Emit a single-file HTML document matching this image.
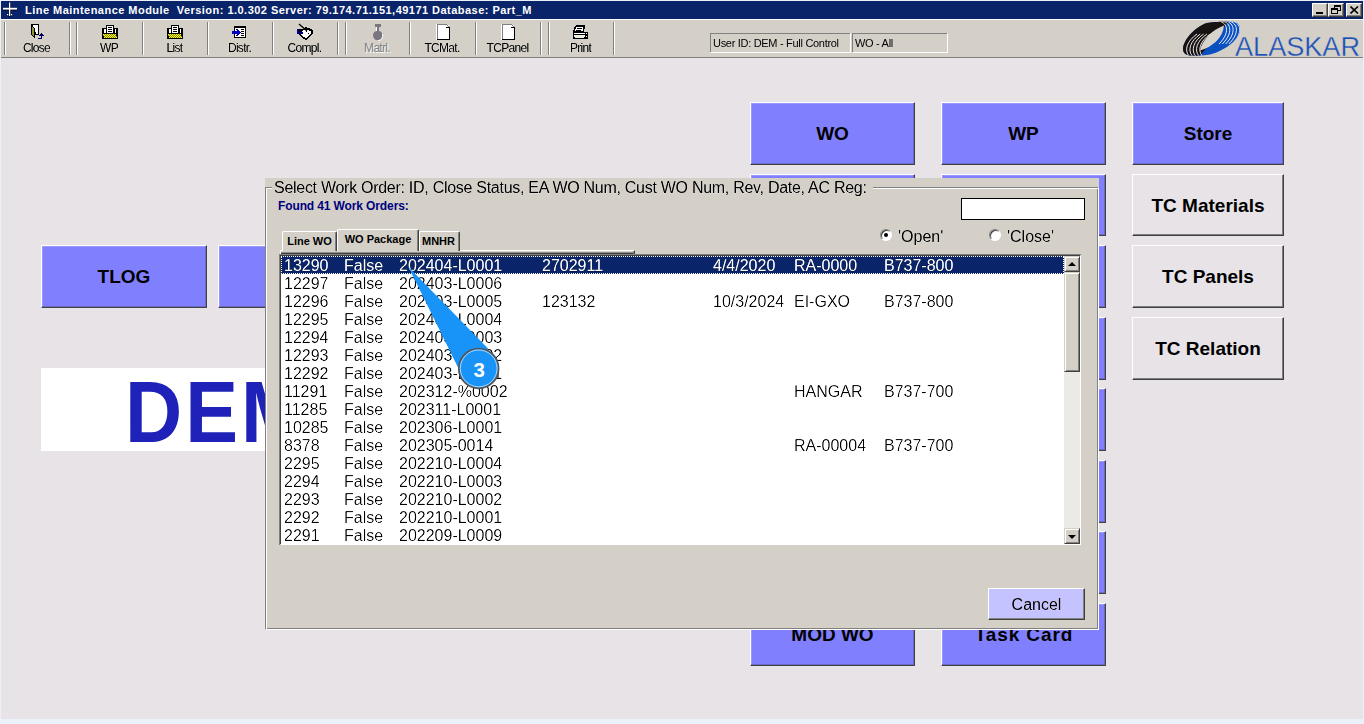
<!DOCTYPE html>
<html><head><meta charset="utf-8">
<style>
*{box-sizing:border-box;margin:0;padding:0}
html,body{width:1364px;height:724px;overflow:hidden;background:#ECF0F9;font-family:"Liberation Sans",sans-serif}
.a{position:absolute}
#bg{left:1px;top:1px;width:1362px;height:718px;background:#E7E3E7}
#title{left:1px;top:1px;width:1362px;height:18px;background:#0A246A}
#ttxt{left:25px;top:3px;color:#fff;font-weight:bold;font-size:11px;letter-spacing:0.47px;white-space:pre;line-height:14px}
.tb{width:16px;height:14px;top:3px;background:#D4D0C8;border-top:1px solid #fff;border-left:1px solid #fff;border-right:1px solid #404040;border-bottom:1px solid #404040;box-shadow:inset -1px -1px 0 #808080}
#toolbar{left:1px;top:20px;width:1362px;height:37px;background:#D4D0C8}
#tbline{left:1px;top:57px;width:1362px;height:1px;background:#808080}
#tbline2{left:1px;top:19px;width:1362px;height:1px;background:#fff}
.sep{top:22px;width:2px;height:33px;border-left:1px solid #808080;border-right:1px solid #fff}
.lbl{top:42px;font-size:12px;letter-spacing:-0.7px;-webkit-text-stroke:0.2px #D4D0C8;filter:grayscale(1) contrast(2.2);line-height:13px;color:#000;text-align:center;white-space:pre}
.field{top:33px;height:20px;border-top:1px solid #808080;border-left:1px solid #808080;border-right:1px solid #fff;border-bottom:1px solid #fff;font-size:11px;line-height:19px;letter-spacing:-0.3px;padding-left:2px;filter:grayscale(1) contrast(1.8);white-space:pre;color:#000}
.bb{background:#8080FF;border-top:1px solid #fff;border-left:1px solid #fff;border-right:1px solid #404040;border-bottom:1px solid #404040;box-shadow:inset -1px -1px 0 #6A6AC8,inset 1px 1px 0 #9898FF;font-weight:bold;font-size:19px;text-align:center;color:#000;line-height:61px;white-space:pre}
.lb{background:#E7E3E7;border-top:1px solid #fff;border-left:1px solid #fff;border-right:1px solid #404040;border-bottom:1px solid #404040;box-shadow:inset -1px -1px 0 #808080;font-weight:bold;font-size:19px;text-align:center;color:#000;line-height:61px;white-space:pre}
#dlg{left:265px;top:178px;width:834px;height:452px;background:#D4D0C8}
.row{position:absolute;left:0;width:783px;height:18px;font-size:16px;line-height:18px;color:#000;white-space:pre;-webkit-text-stroke:0.25px #fff;filter:grayscale(1) contrast(2.2)}
.row span{position:absolute;top:1px}
.radio{width:12px;height:12px;border-radius:50%;background:#fff;border:1px solid #808080;border-right-color:#fff;border-bottom-color:#fff;box-shadow:inset 1px 1px 0 #404040}
.radio .dot{position:absolute;left:3px;top:3px;width:4px;height:4px;border-radius:50%;background:#000}
.tab{background:#D4D0C8;border-top:1px solid #fff;border-left:1px solid #fff;border-right:1px solid #404040;box-shadow:inset -1px 0 0 #808080;font-size:11px;font-weight:bold;line-height:17px;text-align:center;white-space:pre;color:#000;border-radius:2px 2px 0 0}
.row.sel{color:#fff;-webkit-text-stroke:0.25px #0A246A}
.selbg{position:absolute;left:0;top:0;width:783px;height:18px;background:#0A246A;outline:1px dotted #fff;outline-offset:-1px}
.sbtn{background:#D4D0C8;border-top:1px solid #D4D0C8;border-left:1px solid #D4D0C8;border-right:1px solid #404040;border-bottom:1px solid #404040;box-shadow:inset 1px 1px 0 #fff,inset -1px -1px 0 #808080}
</style></head><body>
<div class="a" id="bg"></div>
<div class="a" id="title"></div>
<div class="a" id="ttxt">Line Maintenance Module  Version: 1.0.302 Server: 79.174.71.151,49171 Database: Part_M</div>
<!-- title icon -->
<svg class="a" style="left:0;top:0" width="24" height="19" viewBox="0 0 24 19"><path d="M3 9.3h14" stroke="#000" stroke-width="3" opacity="0.6"/><path d="M9.6 3v14" stroke="#000" stroke-width="2.6" opacity="0.5"/><path d="M3 8.7h14" stroke="#fff" stroke-width="1.8"/><path d="M9.6 2.5v13.5" stroke="#fff" stroke-width="1.3"/><rect x="7" y="14" width="1.2" height="1.2" fill="#fff"/><rect x="11" y="14" width="1.2" height="1.2" fill="#fff"/></svg>
<div class="a tb" style="left:1312px"><div class="a" style="left:3px;top:8px;width:7px;height:2px;background:#000"></div></div>
<div class="a tb" style="left:1328px"><div class="a" style="left:5px;top:1px;width:7px;height:6px;border:1px solid #000;border-top-width:2px"></div><div class="a" style="left:2px;top:4px;width:7px;height:6px;border:1px solid #000;border-top-width:2px;background:#D4D0C8"></div></div>
<div class="a tb" style="left:1346px"><svg class="a" style="left:3px;top:2px" width="9" height="8" viewBox="0 0 9 8"><path d="M0.5 0.5L8 7.5M8 0.5L0.5 7.5" stroke="#000" stroke-width="1.6"/></svg></div>

<div class="a" id="tbline2"></div>
<div class="a" id="toolbar"></div>
<div class="a" id="tbline"></div>

<div class="a sep" style="left:4px"></div>
<div class="a sep" style="left:69px"></div>
<div class="a sep" style="left:76px"></div>
<div class="a sep" style="left:142px"></div>
<div class="a sep" style="left:207px"></div>
<div class="a sep" style="left:272px"></div>
<div class="a sep" style="left:337px"></div>
<div class="a sep" style="left:345px"></div>
<div class="a sep" style="left:409px"></div>
<div class="a sep" style="left:475px"></div>
<div class="a sep" style="left:540px"></div>
<div class="a sep" style="left:548px"></div>
<div class="a sep" style="left:613px"></div>

<div class="a lbl" style="left:5px;width:63px">Close</div>
<div class="a lbl" style="left:77px;width:64px">WP</div>
<div class="a lbl" style="left:143px;width:63px">List</div>
<div class="a lbl" style="left:208px;width:63px">Distr.</div>
<div class="a lbl" style="left:273px;width:63px">Compl.</div>
<div class="a lbl" style="left:346px;width:62px;color:#808080;text-shadow:1px 1px 0 #fff;filter:none;-webkit-text-stroke:0">Matrl.</div>
<div class="a lbl" style="left:410px;width:64px">TCMat.</div>
<div class="a lbl" style="left:476px;width:63px">TCPanel</div>
<div class="a lbl" style="left:549px;width:63px">Print</div>

<!-- toolbar icons -->
<svg class="a" style="left:0;top:18px" width="620" height="26" viewBox="0 18 620 26" shape-rendering="crispEdges">
<defs><pattern id="dy" width="2" height="2" patternUnits="userSpaceOnUse"><rect width="2" height="2" fill="#FFFF00"/><rect width="1" height="1" fill="#80801A"/><rect x="1" y="1" width="1" height="1" fill="#80801A"/></pattern></defs>
<!-- Close -->
<rect x="31" y="24" width="8" height="11" fill="#000"/><rect x="33" y="25" width="5" height="9" fill="#fff"/>
<polygon points="31,25 35,28 35,39 31,35" fill="#000"/><polygon points="32,27 34,29 34,37 32,34" fill="#8A9A3A"/>
<rect x="35" y="32" width="1" height="2" fill="#000"/>
<rect x="38" y="38" width="4" height="1" fill="#000060"/><rect x="41" y="35" width="1" height="4" fill="#000060"/><rect x="39" y="35" width="5" height="1" fill="#000060"/><rect x="40" y="34" width="3" height="1" fill="#000060"/><rect x="41" y="33" width="1" height="1" fill="#000060"/>
<!-- WP -->
<g id="wp">
<rect x="102" y="28" width="16" height="11" fill="#000"/><rect x="104" y="29" width="2" height="4" fill="#fff"/><rect x="115" y="29" width="1" height="4" fill="#fff"/>
<rect x="106" y="25" width="8" height="9" fill="#000"/><rect x="107" y="26" width="6" height="7" fill="#fff"/>
<rect x="108" y="27" width="4" height="1" fill="#000"/><rect x="108" y="29" width="4" height="1" fill="#000"/><rect x="108" y="31" width="4" height="1" fill="#000"/>
<polygon points="103,34 116,34 117,38 104,38" fill="url(#dy)"/>
</g>
<g transform="translate(65 0)">
<rect x="102" y="28" width="16" height="11" fill="#000"/><rect x="104" y="29" width="2" height="4" fill="#fff"/><rect x="115" y="29" width="1" height="4" fill="#fff"/>
<rect x="106" y="25" width="8" height="9" fill="#000"/><rect x="107" y="26" width="6" height="7" fill="#fff"/>
<rect x="108" y="27" width="4" height="1" fill="#000"/><rect x="108" y="29" width="4" height="1" fill="#000"/><rect x="108" y="31" width="4" height="1" fill="#000"/>
<polygon points="103,34 116,34 117,38 104,38" fill="url(#dy)"/>
</g>
<!-- Distr -->
<rect x="234" y="26" width="12" height="12" fill="#000"/><rect x="235" y="28" width="10" height="9" fill="#fff"/>
<rect x="241" y="29" width="3" height="1" fill="#000"/><rect x="241" y="31" width="3" height="1" fill="#000"/><rect x="241" y="33" width="3" height="1" fill="#000"/><rect x="241" y="35" width="3" height="1" fill="#000"/>
<rect x="236" y="29" width="2" height="1" fill="#000"/><rect x="236" y="35" width="2" height="1" fill="#000"/>
<rect x="232" y="31" width="7" height="3" fill="#0000C0"/><polygon points="237,29 241,32.5 237,36" fill="#0000C0"/>
<!-- Compl -->
<polygon points="299,29 303,29 305,27 311,29 313,31 313,34 306,40 303,39 299,35 298,34" fill="#000"/>
<polygon points="303,30 307,30 311,31 311,33 306,38 304,37 301,35 300,34" fill="#fff"/>
<rect x="297" y="29" width="2" height="5" fill="#000080"/><rect x="297" y="32" width="6" height="2" fill="#000080"/>
<line x1="299" y1="24" x2="307" y2="31" stroke="#000" stroke-width="1.3" shape-rendering="auto"/>
<rect x="306" y="31" width="1" height="1" fill="#000"/><rect x="308" y="33" width="1" height="1" fill="#000"/>
<!-- Matrl -->
<rect x="375" y="24" width="6" height="3" fill="#7A7680"/><rect x="376" y="27" width="3" height="4" fill="#7A7680"/><rect x="376" y="27" width="1" height="4" fill="#fff"/>
<circle cx="377.8" cy="35.5" r="4.8" fill="#7A7680" shape-rendering="auto"/>
<path d="M382.5 34 A5 5 0 0 1 378 40.6" stroke="#fff" stroke-width="1" fill="none" shape-rendering="auto"/>
<!-- TCMat -->
<g id="doc">
<rect x="436" y="24" width="1" height="16" fill="#fff"/>
<rect x="437" y="24" width="9" height="16" fill="#808080"/><rect x="438" y="25" width="11" height="14" fill="#fff"/>
<rect x="449" y="27" width="1" height="13" fill="#000"/><rect x="437" y="39" width="13" height="1" fill="#000"/>
<rect x="446" y="27" width="3" height="1" fill="#000"/><rect x="446" y="24" width="1" height="1" fill="#808080"/><rect x="447" y="25" width="1" height="1" fill="#808080"/><rect x="448" y="26" width="1" height="1" fill="#808080"/>
<rect x="446" y="25" width="1" height="2" fill="#fff"/><rect x="447" y="26" width="1" height="1" fill="#fff"/>
</g>
<g transform="translate(65 0)">
<rect x="436" y="24" width="1" height="16" fill="#fff"/>
<rect x="437" y="24" width="9" height="16" fill="#808080"/><rect x="438" y="25" width="11" height="14" fill="#fff"/>
<rect x="449" y="27" width="1" height="13" fill="#000"/><rect x="437" y="39" width="13" height="1" fill="#000"/>
<rect x="446" y="27" width="3" height="1" fill="#000"/><rect x="446" y="24" width="1" height="1" fill="#808080"/><rect x="447" y="25" width="1" height="1" fill="#808080"/><rect x="448" y="26" width="1" height="1" fill="#808080"/>
<rect x="446" y="25" width="1" height="2" fill="#fff"/><rect x="447" y="26" width="1" height="1" fill="#fff"/>
</g>
<!-- Print -->
<rect x="576" y="25" width="9" height="1" fill="#000"/><polygon points="575,26 585,26 584,32 573,32" fill="#000"/><polygon points="576,27 583.5,27 583,31 575,31" fill="#fff"/>
<rect x="577" y="28" width="5" height="1" fill="#000"/><rect x="576" y="30" width="5" height="1" fill="#000"/>
<rect x="573" y="32" width="15" height="7" fill="#000"/><rect x="574" y="33" width="11" height="1" fill="#fff"/><rect x="574" y="35" width="11" height="2" fill="#F0F0E0"/><rect x="575" y="37" width="9" height="1" fill="#F0F0E0"/>
<rect x="586" y="33" width="1" height="1" fill="#fff"/><rect x="586" y="36" width="1" height="1" fill="#fff"/>
</svg>
<!-- logo -->
<svg class="a" style="left:1176px;top:20px" width="188" height="38" viewBox="1176 20 188 38">
<defs>
<clipPath id="outer"><path d="M1183,49 C1183,41 1194,27 1207,23 C1213,21.5 1226,21.5 1233,21.8 C1239,22 1241,27 1239.5,33 C1237,41 1224,51 1210,54.5 C1203,55.8 1195,55.8 1190,55.5 C1185.5,55 1183,52.5 1183,49 Z"/></clipPath>
</defs>
<g clip-path="url(#outer)">
<rect x="1176" y="18" width="70" height="40" fill="#0A50C0"/>
<polygon points="1176,18 1232,18 1198,58 1176,58" fill="#181212"/>
<g fill="none" stroke="#fff" stroke-width="0.9"><path d="M1189.0,56 C1184.0,50 1187.0,41 1197.0,34"/><path d="M1192.3,56 C1187.3,50 1190.3,41 1200.3,34"/><path d="M1195.6,56 C1190.6,50 1193.6,41 1203.6,34"/><path d="M1198.9,56 C1193.9,50 1196.9,41 1206.9,34"/><path d="M1202.2,56 C1197.2,50 1200.2,41 1210.2,34"/><path d="M1219.0,21 C1228.0,23 1230.0,33 1219.0,44"/><path d="M1222.3,21 C1231.3,23 1233.3,33 1222.3,44"/><path d="M1225.6,21 C1234.6,23 1236.6,33 1225.6,44"/><path d="M1228.9,21 C1237.9,23 1239.9,33 1228.9,44"/><path d="M1232.2,21 C1241.2,23 1243.2,33 1232.2,44"/></g>
<path d="M1200,50.5 C1202,40 1212,30 1224,25.5 C1223,38 1212,47 1200,50.5 Z" fill="#D8D4CC"/>
</g>
<text x="1235" y="55.6" font-family="Liberation Sans" font-size="27.4" fill="#1E50B8" stroke="#D4D0C8" stroke-width="0.35" textLength="125" lengthAdjust="spacingAndGlyphs">ALASKAR</text>
</svg>
<div class="a field" style="left:710px;width:141px">User ID: DEM - Full Control</div>
<div class="a field" style="left:852px;width:96px">WO - All</div>

<!-- main buttons -->
<div class="a bb" style="left:41px;top:245px;width:166px;height:63px">TLOG</div>
<div class="a bb" style="left:218px;top:245px;width:166px;height:63px"></div>
<div class="a" style="left:41px;top:368px;width:400px;height:83px;background:#fff"></div>
<div class="a" style="left:125px;top:362px;font-size:87px;font-weight:bold;color:#1E22B8;line-height:100px;white-space:pre;letter-spacing:3.3px;transform:scaleX(0.91);transform-origin:0 0">DEMO</div>

<div class="a bb" style="left:750px;top:102px;width:165px;height:63px">WO</div>
<div class="a bb" style="left:941px;top:102px;width:165px;height:63px">WP</div>
<div class="a bb" style="left:1132px;top:102px;width:152px;height:63px">Store</div>
<div class="a lb" style="left:1132px;top:174px;width:152px;height:62px">TC Materials</div>
<div class="a lb" style="left:1132px;top:245px;width:152px;height:63px">TC Panels</div>
<div class="a lb" style="left:1132px;top:317px;width:152px;height:63px">TC Relation</div>

<div class="a bb" style="left:750px;top:174px;width:165px;height:62px"></div>
<div class="a bb" style="left:941px;top:174px;width:165px;height:62px"></div>
<div class="a bb" style="left:941px;top:245px;width:165px;height:63px"></div>
<div class="a bb" style="left:941px;top:317px;width:165px;height:63px"></div>
<div class="a bb" style="left:941px;top:388px;width:165px;height:63px"></div>
<div class="a bb" style="left:941px;top:460px;width:165px;height:63px"></div>
<div class="a bb" style="left:941px;top:531px;width:165px;height:63px"></div>
<div class="a bb" style="left:750px;top:603px;width:165px;height:63px">MOD WO</div>
<div class="a bb" style="left:941px;top:603px;width:165px;height:63px;letter-spacing:0.9px;text-indent:0.9px">Task Card</div>

<!-- dialog -->
<div class="a" id="dlg"></div>
<div class="a" style="left:265px;top:187px;width:833px;height:442px;border:1px solid #808080"></div>
<div class="a" style="left:266px;top:188px;width:833px;height:442px;border:1px solid #fff"></div>
<div class="a" id="gtitle" style="left:272px;top:179px;width:601px;height:18px;background:#D4D0C8;font-size:16px;line-height:18px;letter-spacing:-0.28px;padding-left:2px;white-space:pre;color:#000"><span style="display:inline-block;-webkit-text-stroke:0.25px #D4D0C8;filter:grayscale(1) contrast(2.2)">Select Work Order: ID, Close Status, EA WO Num, Cust WO Num, Rev, Date, AC Reg:</span></div>
<div class="a" style="left:278px;top:199px;font-size:12px;line-height:14px;font-weight:bold;color:#000080;letter-spacing:-0.12px;white-space:pre">Found 41 Work Orders:</div>
<div class="a" style="left:961px;top:198px;width:124px;height:22px;background:#fff;border:1px solid #000"></div>
<div class="a radio" style="left:880px;top:229px"><div class="dot"></div></div>
<div class="a" style="left:898px;top:228px;font-size:16px;line-height:18px;white-space:pre;-webkit-text-stroke:0.25px #D4D0C8;filter:grayscale(1) contrast(2.2)">'Open'</div>
<div class="a radio" style="left:989px;top:229px"></div>
<div class="a" style="left:1007px;top:228px;font-size:16px;line-height:18px;white-space:pre;-webkit-text-stroke:0.25px #D4D0C8;filter:grayscale(1) contrast(2.2)">'Close'</div>
<!-- tab control -->
<div class="a" style="left:280px;top:250px;width:355px;height:4px;background:linear-gradient(#D4D0C8 0,#D4D0C8 1px,#909090 1px,#909090 2px,#404040 2px);border-top:1px solid #fff;border-left:1px solid #fff;border-right:1px solid #404040;box-shadow:inset -1px 0 0 #808080"></div>
<div class="a tab" style="left:282px;top:231px;width:55px;height:20px;line-height:19px">Line WO</div>
<div class="a tab" style="left:419px;top:231px;width:41px;height:20px;line-height:19px;padding-right:2px">MNHR</div>
<div class="a tab sel" style="left:337px;top:229px;width:82px;height:22px;line-height:19px">WO Package</div>
<!-- listbox -->
<div class="a" id="lb" style="left:279px;top:254px;width:802px;height:291px;background:#fff;border-top:2px solid #404040;border-left:2px solid #404040;border-right:1px solid #fff;border-bottom:1px solid #fff;">
<div class="selbg"></div><div class="row sel" style="top:0px"><span style="left:3px">13290</span><span style="left:63px">False</span><span style="left:118px">202404-L0001</span><span style="left:261px">2702911</span><span style="left:432px">4/4/2020</span><span style="left:513px">RA-0000</span><span style="left:603px">B737-800</span></div>
<div class="row" style="top:18px"><span style="left:3px">12297</span><span style="left:63px">False</span><span style="left:118px">202403-L0006</span></div>
<div class="row" style="top:36px"><span style="left:3px">12296</span><span style="left:63px">False</span><span style="left:118px">202403-L0005</span><span style="left:261px">123132</span><span style="left:432px">10/3/2024</span><span style="left:513px">EI-GXO</span><span style="left:603px">B737-800</span></div>
<div class="row" style="top:54px"><span style="left:3px">12295</span><span style="left:63px">False</span><span style="left:118px">202403-L0004</span></div>
<div class="row" style="top:72px"><span style="left:3px">12294</span><span style="left:63px">False</span><span style="left:118px">202403-L0003</span></div>
<div class="row" style="top:90px"><span style="left:3px">12293</span><span style="left:63px">False</span><span style="left:118px">202403-L0002</span></div>
<div class="row" style="top:108px"><span style="left:3px">12292</span><span style="left:63px">False</span><span style="left:118px">202403-L0001</span></div>
<div class="row" style="top:126px"><span style="left:3px">11291</span><span style="left:63px">False</span><span style="left:118px">202312-%0002</span><span style="left:513px">HANGAR</span><span style="left:603px">B737-700</span></div>
<div class="row" style="top:144px"><span style="left:3px">11285</span><span style="left:63px">False</span><span style="left:118px">202311-L0001</span></div>
<div class="row" style="top:162px"><span style="left:3px">10285</span><span style="left:63px">False</span><span style="left:118px">202306-L0001</span></div>
<div class="row" style="top:180px"><span style="left:3px">8378</span><span style="left:63px">False</span><span style="left:118px">202305-0014</span><span style="left:513px">RA-00004</span><span style="left:603px">B737-700</span></div>
<div class="row" style="top:198px"><span style="left:3px">2295</span><span style="left:63px">False</span><span style="left:118px">202210-L0004</span></div>
<div class="row" style="top:216px"><span style="left:3px">2294</span><span style="left:63px">False</span><span style="left:118px">202210-L0003</span></div>
<div class="row" style="top:234px"><span style="left:3px">2293</span><span style="left:63px">False</span><span style="left:118px">202210-L0002</span></div>
<div class="row" style="top:252px"><span style="left:3px">2292</span><span style="left:63px">False</span><span style="left:118px">202210-L0001</span></div>
<div class="row" style="top:270px"><span style="left:3px">2291</span><span style="left:63px">False</span><span style="left:118px">202209-L0009</span></div>
</div>
<div class="a" style="left:279px;top:254px;width:802px;height:1px;background:#808080"></div>
<div class="a" style="left:279px;top:254px;width:1px;height:291px;background:#808080"></div>
<!-- scrollbar -->
<div class="a" style="left:1064px;top:256px;width:16px;height:288px;background:#ECEAE6"></div>
<div class="a sbtn" style="left:1064px;top:256px;width:16px;height:16px"><div class="a" style="left:3px;top:5px;width:0;height:0;border-left:4px solid transparent;border-right:4px solid transparent;border-bottom:4px solid #000"></div></div>
<div class="a sbtn" style="left:1064px;top:272px;width:16px;height:100px"></div>
<div class="a sbtn" style="left:1064px;top:528px;width:16px;height:16px"><div class="a" style="left:3px;top:6px;width:0;height:0;border-left:4px solid transparent;border-right:4px solid transparent;border-top:4px solid #000"></div></div>
<!-- cancel -->
<div class="a" style="left:988px;top:588px;width:97px;height:32px;background:#C4C2FF;border-top:1px solid #fff;border-left:1px solid #fff;border-right:1px solid #404040;border-bottom:1px solid #404040;box-shadow:inset -1px -1px 0 #808080;font-size:16px;line-height:32px;text-align:center;color:#000;white-space:pre"><span style="display:inline-block;-webkit-text-stroke:0.25px #C4C2FF;filter:grayscale(1) contrast(2.2)">Cancel</span></div>

<!-- callout -->
<svg class="a" style="left:0;top:0" width="1364" height="724" viewBox="0 0 1364 724">
<polygon points="408.5,267 488,348.5 479,368 458.5,368.5" fill="#1893F8"/>
<circle cx="478.7" cy="368.4" r="19.9" fill="#1893F8" stroke="#555" stroke-width="1.7"/>
<circle cx="478.7" cy="368.4" r="18.4" fill="none" stroke="#fff" stroke-width="0.8" opacity="0.8"/>
<text x="479.2" y="377" text-anchor="middle" font-family="Liberation Sans" font-weight="bold" font-size="20.5" fill="#fff">3</text>
</svg>
</body></html>
